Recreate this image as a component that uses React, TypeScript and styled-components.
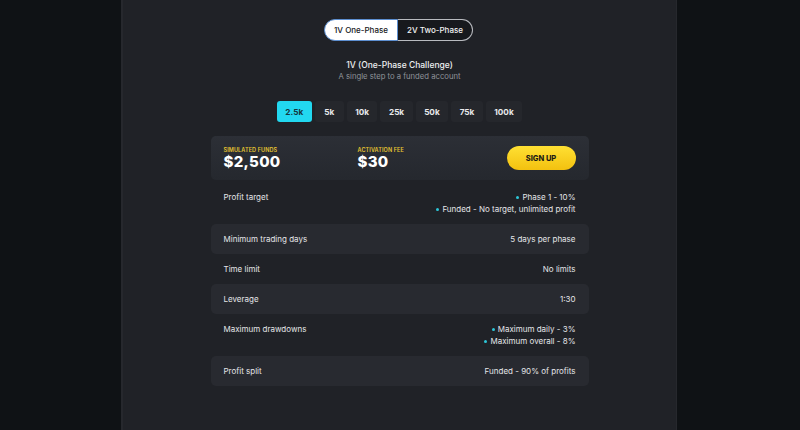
import styled, { createGlobalStyle } from "styled-components";

const GlobalStyle = createGlobalStyle`
  html, body {
    margin: 0;
    padding: 0;
    background: #0f1215;
    font-family: Inter, "Noto Sans", sans-serif;
  }
  #root {
    height: 430px;
    overflow: hidden;
  }
`;

const Page = styled.div`
  display: flex;
  justify-content: center;
  height: 430px;
  padding-right: 2px;
`;

const Panel = styled.div`
  width: 556px;
  height: 100%;
  background: #202227;
  border-left: 2px solid #26282d;
  border-right: 1px solid #26282d;
  display: flex;
  flex-direction: column;
  align-items: center;
  padding-top: 19px;
  box-sizing: border-box;
`;

const Toggle = styled.div`
  display: flex;
  height: 22px;
  margin-right: 2px;
`;

const ToggleButton = styled.div<{ $active?: boolean }>`
  width: ${(p) => (p.$active ? 74 : 75)}px;
  box-sizing: border-box;
  display: flex;
  align-items: center;
  justify-content: center;
  font-size: 8px;
  font-weight: 500;
  color: ${(p) => (p.$active ? "#15171b" : "#f1f1f3")};
  background: ${(p) => (p.$active ? "#ffffff" : "#17191d")};
  border: 1.5px solid ${(p) => (p.$active ? "#5d8fd0" : "#b9bbc0")};
  border-radius: ${(p) => (p.$active ? "11px 0 0 11px" : "0 11px 11px 0")};
  border-left-width: ${(p) => (p.$active ? "1.5px" : "0")};
`;

const Heading = styled.div`
  margin-top: 19px;
  font-size: 8.5px;
  font-weight: 500;
  color: #eef0f2;
  line-height: 11px;
`;

const Subheading = styled.div`
  font-size: 7.7px;
  color: #8f9399;
  line-height: 11px;
`;

const Sizes = styled.div`
  display: flex;
  gap: 3px;
  margin-top: 19px;
`;

const SizeTab = styled.div<{ $active?: boolean }>`
  height: 21px;
  min-width: 29px;
  box-sizing: border-box;
  padding: 0 8.5px;
  display: flex;
  align-items: center;
  justify-content: center;
  font-size: 8.2px;
  font-weight: 700;
  border-radius: 3px;
  color: ${(p) => (p.$active ? "#15363d" : "#e9eaec")};
  background: ${(p) => (p.$active ? "#22d8f0" : "#25272c")};
`;

const Card = styled.div`
  margin-top: 14px;
  width: 378px;
  height: 44px;
  box-sizing: border-box;
  border-radius: 5px;
  background: linear-gradient(180deg, #2c2f36 0%, #25282e 100%);
  display: flex;
  align-items: center;
  padding: 0 13px;
`;

const Stat = styled.div<{ $width: number }>`
  width: ${(p) => p.$width}px;
  display: flex;
  flex-direction: column;
`;

const StatLabel = styled.div`
  font-size: 5.5px;
  font-weight: 600;
  color: #e6c431;
  letter-spacing: 0.1px;
  line-height: 7px;
`;

const StatValue = styled.div`
  font-size: 15px;
  font-weight: 800;
  color: #ffffff;
  line-height: 16px;
  letter-spacing: 0.3px;
`;

const SignUp = styled.div`
  margin-left: auto;
  width: 69px;
  height: 24px;
  border-radius: 12px;
  background: linear-gradient(180deg, #ffe033 0%, #f3c10f 100%);
  display: flex;
  align-items: center;
  justify-content: center;
  font-size: 7.5px;
  font-weight: 800;
  color: #1d1c14;
`;

const Rows = styled.div`
  margin-top: 2px;
  width: 378px;
  display: flex;
  flex-direction: column;
`;

const Row = styled.div<{ $shaded?: boolean }>`
  display: flex;
  justify-content: space-between;
  padding: 9px 13px;
  border-radius: 5px;
  background: ${(p) => (p.$shaded ? "#282a30" : "transparent")};
  font-size: 8px;
  line-height: 12px;
  color: #e4e5e8;
`;

const Values = styled.div`
  display: flex;
  flex-direction: column;
  align-items: flex-end;
`;

const Bullet = styled.div`
  display: flex;
  align-items: center;
  gap: 3px;
  &::before {
    content: "";
    width: 3px;
    height: 3px;
    border-radius: 50%;
    background: #2cc6d8;
  }
`;

const rows = [
  { label: "Profit target", bullets: ["Phase 1 - 10%", "Funded - No target, unlimited profit"] },
  { label: "Minimum trading days", value: "5 days per phase" },
  { label: "Time limit", value: "No limits" },
  { label: "Leverage", value: "1:30" },
  { label: "Maximum drawdowns", bullets: ["Maximum daily - 3%", "Maximum overall - 8%"] },
  { label: "Profit split", value: "Funded - 90% of profits" },
];

const sizes = ["2.5k", "5k", "10k", "25k", "50k", "75k", "100k"];

export default function App() {
  return (
    <Page>
      <GlobalStyle />
      <Panel>
        <Toggle>
          <ToggleButton $active>1V One-Phase</ToggleButton>
          <ToggleButton>2V Two-Phase</ToggleButton>
        </Toggle>
        <Heading>1V (One-Phase Challenge)</Heading>
        <Subheading>A single step to a funded account</Subheading>
        <Sizes>
          {sizes.map((s, i) => (
            <SizeTab key={s} $active={i === 0}>
              {s}
            </SizeTab>
          ))}
        </Sizes>
        <Card>
          <Stat $width={134}>
            <StatLabel>SIMULATED FUNDS</StatLabel>
            <StatValue>$2,500</StatValue>
          </Stat>
          <Stat $width={100}>
            <StatLabel>ACTIVATION FEE</StatLabel>
            <StatValue>$30</StatValue>
          </Stat>
          <SignUp>SIGN UP</SignUp>
        </Card>
        <Rows>
          {rows.map((r, i) => (
            <Row key={r.label} $shaded={i % 2 === 1}>
              <span>{r.label}</span>
              <Values>
                {r.bullets
                  ? r.bullets.map((b) => <Bullet key={b}>{b}</Bullet>)
                  : r.value}
              </Values>
            </Row>
          ))}
        </Rows>
      </Panel>
    </Page>
  );
}
